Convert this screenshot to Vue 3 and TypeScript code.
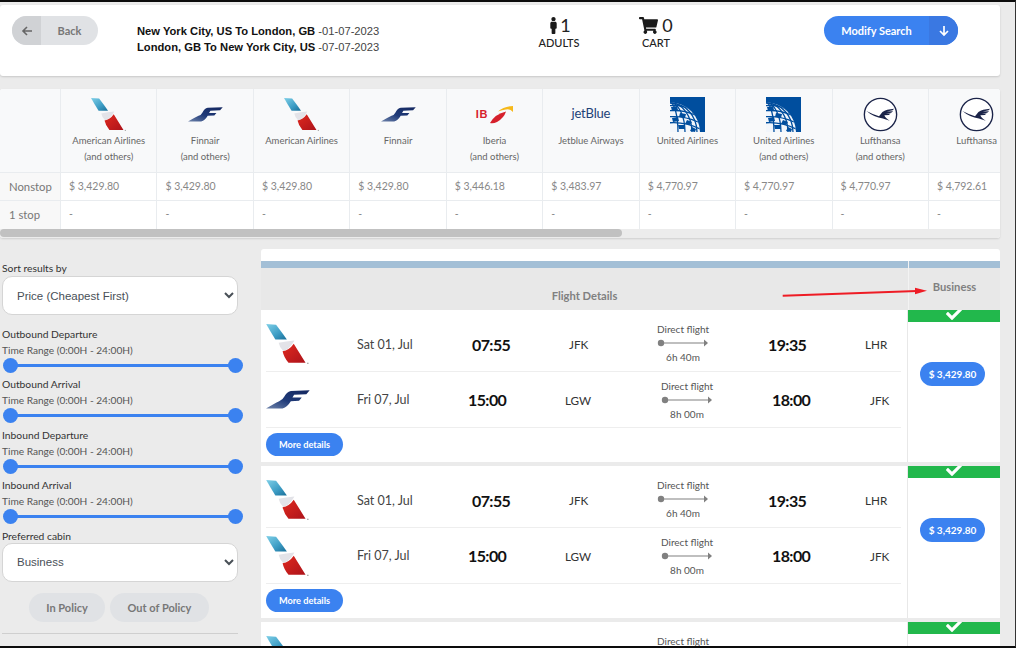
<script setup lang="ts">
interface Airline { logo: string; name: string; others: boolean; price: string }
const airlines: Airline[] = [
  { logo: 'aa', name: 'American Airlines', others: true, price: '$ 3,429.80' },
  { logo: 'fin', name: 'Finnair', others: true, price: '$ 3,429.80' },
  { logo: 'aa', name: 'American Airlines', others: false, price: '$ 3,429.80' },
  { logo: 'fin', name: 'Finnair', others: false, price: '$ 3,429.80' },
  { logo: 'ib', name: 'Iberia', others: true, price: '$ 3,446.18' },
  { logo: 'jb', name: 'Jetblue Airways', others: false, price: '$ 3,483.97' },
  { logo: 'ua', name: 'United Airlines', others: false, price: '$ 4,770.97' },
  { logo: 'ua', name: 'United Airlines', others: true, price: '$ 4,770.97' },
  { logo: 'lh', name: 'Lufthansa', others: true, price: '$ 4,770.97' },
  { logo: 'lh', name: 'Lufthansa', others: false, price: '$ 4,792.61' },
]
const filters = ['Outbound Departure', 'Outbound Arrival', 'Inbound Departure', 'Inbound Arrival']
const results = [{ back: 'fin' }, { back: 'aa' }, { back: 'aa' }]
</script>

<template>
  <div class="page">
    <svg class="defs" width="0" height="0" aria-hidden="true">
      <defs>
        <linearGradient id="finGrad" x1="0" y1="1" x2="1" y2="0">
          <stop offset="0" stop-color="#6f84ab" />
          <stop offset="0.45" stop-color="#1f3a78" />
          <stop offset="1" stop-color="#14275f" />
        </linearGradient>
        <linearGradient id="aaBlue" x1="0" y1="0" x2="1" y2="1">
          <stop offset="0" stop-color="#7fd0e8" />
          <stop offset="0.6" stop-color="#3c9cc4" />
          <stop offset="1" stop-color="#1a6f99" />
        </linearGradient>
        <linearGradient id="aaRed" x1="0" y1="0" x2="1" y2="1">
          <stop offset="0" stop-color="#e0291f" />
          <stop offset="1" stop-color="#ad131a" />
        </linearGradient>
        <symbol id="aa" viewBox="0 0 133 122">
          <path d="M0 0 L30 2 Q50 28 63 47 L28 47 Q12 22 0 0Z" fill="url(#aaBlue)" />
          <path d="M38 57 Q60 52 86 50 L80 60 Q68 78 52 82 Q40 70 38 57Z" fill="#e3e3e8" />
          <path d="M50 83 Q70 80 84 60 L120 118 L68 118 Q54 102 50 83Z" fill="url(#aaRed)" />
          <circle cx="127" cy="120" r="2.5" fill="#aaa" />
        </symbol>
        <symbol id="fin" viewBox="0 0 133 56">
          <path d="M0 55 Q25 40 40 33 Q50 30 55 20 Q62 5 75 2 L132 0 L122 12 L85 14 L80 22 L108 22 L100 32 L75 33 Q65 50 50 55Z" fill="url(#finGrad)" />
        </symbol>
        <symbol id="ib" viewBox="0 0 24 19">
          <path d="M1 18 Q6 9 17 6.5 Q15 13 8 17 Q4 19 1 18Z" fill="#d6202b" />
          <path d="M9 6.5 Q15 1 24 1 L24 7 Q21 3.5 17 4.5 Q13 5 9 6.5Z" fill="#f6b91a" />
        </symbol>
        <symbol id="ua" viewBox="0 0 35 35">
          <clipPath id="uaClip"><circle cx="0" cy="35.5" r="30" /></clipPath>
          <rect width="35" height="35" fill="#004e9e" />
          <g clip-path="url(#uaClip)">
            <rect width="35" height="35" fill="#f2f6fb" />
            <g fill="none" stroke="#004e9e" stroke-width="1.3">
              <ellipse cx="0" cy="35.5" rx="8" ry="30" />
              <ellipse cx="0" cy="35.5" rx="15" ry="30" />
              <ellipse cx="0" cy="35.5" rx="22" ry="30" />
              <ellipse cx="0" cy="35.5" rx="27" ry="30" />
              <path d="M-3 9 Q10 7 20 12" />
              <path d="M-3 14 Q12 12 25 18" />
              <path d="M-3 20 Q13 18 28 25" />
              <path d="M-3 26 Q14 24 30 32" />
            </g>
            <g fill="#004e9e">
              <path d="M1 10l6-1 1 4-6 1z" />
              <path d="M10 16l6 1-1 4-6-1z" />
              <path d="M2 21l6-1 1 4-6 1z" />
              <path d="M17 23l5 2-2 3-5-1z" />
              <path d="M8 28l6 0 1 4-6 0z" />
              <path d="M22 30l4 2-1 3-5-1z" />
            </g>
          </g>
        </symbol>
        <symbol id="lh" viewBox="0 0 36 36">
          <circle cx="18" cy="18" r="16.6" fill="#fff" stroke="#1b2449" stroke-width="1.4" />
          <path d="M3.5 14.5 Q10 18 16.5 19.8 L20 15.5 Q24 12.5 32 12 L30.5 13.5 L24.5 14.8 L31 14.7 L29 16.3 L23.5 17 L28.5 17 L26.5 18.5 L22 18.8 Q22.5 21 27.5 24.5 L20.5 22 Q11 21 3.5 14.5Z" fill="#1b2449" />
        </symbol>
      </defs>
    </svg>

    <header class="topbar">
      <button class="back"><span class="back-icon"><svg width="12" height="12" viewBox="0 0 12 12"><path d="M11 6H2M6 2 2 6l4 4" fill="none" stroke="#666" stroke-width="1.6" /></svg></span><span class="back-text">Back</span></button>
      <div class="route">
        <div><b>New York City, US To London, GB</b> -01-07-2023</div>
        <div><b>London, GB To New York City, US</b> -07-07-2023</div>
      </div>
      <div class="stat adults">
        <div class="stat-top">
          <svg width="7" height="17" viewBox="0 0 192 512"><path fill="#1a1a1a" d="M96 0c35.346 0 64 28.654 64 64s-28.654 64-64 64-64-28.654-64-64S60.654 0 96 0m48 144h-11.36c-22.711 10.443-49.59 10.894-73.28 0H48c-26.51 0-48 21.49-48 48v136c0 13.255 10.745 24 24 24h16v136c0 13.255 10.745 24 24 24h64c13.255 0 24-10.745 24-24V352h16c13.255 0 24-10.745 24-24V192c0-26.51-21.49-48-48-48z" /></svg>
          <span>1</span>
        </div>
        <div class="stat-label">ADULTS</div>
      </div>
      <div class="stat cart">
        <div class="stat-top">
          <svg width="19" height="17" viewBox="0 0 576 512"><path fill="#1a1a1a" d="M528.12 301.319l47.273-208C578.806 78.301 567.391 64 551.99 64H159.208l-9.166-44.81C147.758 8.021 137.93 0 126.529 0H24C10.745 0 0 10.745 0 24v16c0 13.255 10.745 24 24 24h69.883l70.248 343.435C147.325 417.1 136 435.222 136 456c0 30.928 25.072 56 56 56s56-25.072 56-56c0-15.674-6.447-29.835-16.824-40h209.647C430.447 426.165 424 440.326 424 456c0 30.928 25.072 56 56 56s56-25.072 56-56c0-22.172-12.888-41.332-31.579-50.405l5.517-24.276c3.413-15.018-8.002-29.319-23.403-29.319H218.117l-6.545-32h293.145c11.206 0 20.92-7.754 23.403-18.681z" /></svg>
          <span>0</span>
        </div>
        <div class="stat-label">CART</div>
      </div>
      <button class="modify"><span class="modify-text">Modify Search</span><span class="modify-icon"><svg width="12" height="12" viewBox="0 0 12 12"><path d="M6 1v9M2 6l4 4 4-4" fill="none" stroke="#fff" stroke-width="1.7" /></svg></span></button>
    </header>

    <section class="matrix">
      <div class="matrix-grid">
        <div class="cell head corner"></div>
        <div v-for="(a, i) in airlines" :key="'h' + i" class="cell head">
          <div class="logo-slot">
            <span v-if="a.logo === 'jb'" class="jetblue">jetBlue</span>
            <span v-else-if="a.logo === 'ib'" class="iberia"><span class="ib-text">IB</span><svg width="24" height="19"><use href="#ib" /></svg></span>
            <svg v-else-if="a.logo === 'aa'" width="36" height="33" class="aa-top"><use href="#aa" /></svg>
            <svg v-else-if="a.logo === 'fin'" width="35" height="15" class="fin-top"><use href="#fin" /></svg>
            <svg v-else width="35" height="35"><use :href="'#' + a.logo" /></svg>
          </div>
          <div class="air-name">{{ a.name }}</div>
          <div v-if="a.others" class="air-name">(and others)</div>
        </div>
        <div class="cell label row-a">Nonstop</div>
        <div v-for="(a, i) in airlines" :key="'p' + i" class="cell price row-a">{{ a.price }}</div>
        <div class="cell label row-b">1 stop</div>
        <div v-for="(a, i) in airlines" :key="'d' + i" class="cell price row-b dash">-</div>
      </div>
      <div class="scroll-track"><div class="scroll-thumb"></div></div>
    </section>

    <div class="lower">
      <aside class="sidebar">
        <div class="side-label">Sort results by</div>
        <select class="side-select first">
          <option>Price (Cheapest First)</option>
        </select>
        <div class="filters">
          <div v-for="f in filters" :key="f" class="filter">
            <div class="side-label">{{ f }}</div>
            <div class="side-sub">Time Range (0:00H - 24:00H)</div>
            <div class="slider"><span class="thumb"></span><span class="thumb"></span></div>
          </div>
        </div>
        <div class="side-label">Preferred cabin</div>
        <select class="side-select cabin">
          <option>Business</option>
        </select>
        <div class="policy">
          <button class="policy-btn in">In Policy</button>
          <button class="policy-btn outp">Out of Policy</button>
        </div>
        <hr class="side-rule" />
      </aside>

      <main class="results">
        <div class="blue-bar"></div>
        <div class="res-head">
          <div class="res-head-left">Flight Details</div>
          <div class="res-head-right">Business</div>
          <svg class="annot" width="150" height="12" viewBox="0 0 150 12"><path d="M1.7 8.7 136 4" stroke="#ee1c25" stroke-width="2" fill="none" /><path d="M134 .7 146 3.7 134 7.3z" fill="#ee1c25" /></svg>
        </div>
        <article v-for="(r, i) in results" :key="i" class="card">
          <div class="legs">
            <div class="leg out">
              <svg width="44" height="40"><use href="#aa" /></svg>
              <span class="date">Sat 01, Jul</span>
              <span class="time">07:55</span>
              <span class="code">JFK</span>
              <div class="direct">
                <div>Direct flight</div>
                <svg width="52" height="14" viewBox="0 0 52 14"><circle cx="4" cy="7" r="3.2" fill="#808080" /><path d="M4 7H48" stroke="#808080" stroke-width="1.2" /><path d="M47 3.5 51 7l-4 3.5z" fill="#808080" /></svg>
                <div class="dur">6h 40m</div>
              </div>
              <span class="time">19:35</span>
              <span class="code">LHR</span>
            </div>
            <div class="leg ret">
              <svg v-if="r.back === 'fin'" width="44" height="19"><use href="#fin" /></svg>
              <svg v-else width="44" height="40"><use href="#aa" /></svg>
              <span class="date">Fri 07, Jul</span>
              <span class="time">15:00</span>
              <span class="code">LGW</span>
              <div class="direct">
                <div>Direct flight</div>
                <svg width="52" height="14" viewBox="0 0 52 14"><circle cx="4" cy="7" r="3.2" fill="#808080" /><path d="M4 7H48" stroke="#808080" stroke-width="1.2" /><path d="M47 3.5 51 7l-4 3.5z" fill="#808080" /></svg>
                <div class="dur">8h 00m</div>
              </div>
              <span class="time">18:00</span>
              <span class="code">JFK</span>
            </div>
            <button class="more">More details</button>
          </div>
          <div class="fare">
            <div class="fare-ok"><svg width="16" height="16" viewBox="0 0 512 512"><path fill="#fff" d="M173.898 439.404l-166.4-166.4c-9.997-9.997-9.997-26.206 0-36.204l36.203-36.204c9.997-9.998 26.207-9.998 36.204 0L192 312.69 432.095 72.596c9.997-9.997 26.207-9.997 36.204 0l36.203 36.204c9.997 9.997 9.997 26.206 0 36.204l-294.4 294.401c-9.998 9.997-26.207 9.997-36.204-.001z" /></svg></div>
            <button class="fare-price">$ 3,429.80</button>
          </div>
        </article>
      </main>
    </div>
  </div>
</template>

<style>
html, body { margin: 0; padding: 0; background: #ebebeb; }
</style>

<style scoped>
.page {
  position: relative;
  box-sizing: border-box;
  width: 1016px;
  height: 648px;
  overflow: hidden;
  background: #ebebeb;
  border-top: 2px solid #0c0c0c;
  border-bottom: 2px solid #0c0c0c;
  border-right: 1px solid #333;
  font-family: Lato, "Open Sans", sans-serif;
  color: #333;
}
.defs { position: absolute; }
button { font-family: inherit; border: 0; padding: 0; cursor: pointer; }

.topbar {
  box-sizing: border-box;
  display: flex;
  align-items: flex-start;
  width: 1000px;
  height: 71px;
  margin-top: 3px;
  padding: 11px 0 0 12px;
  background: #fff;
  border-radius: 3px;
  box-shadow: 0 1px 2px rgba(0,0,0,.15);
}
.back {
  display: flex;
  width: 86px;
  height: 29px;
  border-radius: 15px;
  overflow: hidden;
  background: #e0e2e5;
  color: #777;
  font-size: 11px;
  font-weight: 700;
}
.back-icon { display: flex; align-items: center; justify-content: center; width: 29px; height: 100%; background: #d0d2d5; }
.back-text { flex: 1; line-height: 29px; text-align: center; }
.route {
  width: 401px;
  margin-left: 39px;
  padding-top: 7px;
  font: 11.2px/16px "Liberation Sans", sans-serif;
  color: #444;
  white-space: nowrap;
}
.route b { color: #111; }
.stat { display: flex; flex-direction: column; align-items: center; color: #222; }
.adults { width: 42px; }
.cart { width: 32px; margin-left: 60px; }
.stat-top { display: flex; align-items: center; gap: 4px; height: 19px; font-size: 18px; line-height: 19px; }
.adults .stat-top { margin-left: 3px; gap: 3px; }
.stat-label { font-size: 11px; line-height: 14px; margin-top: 1px; font-weight: 500; }
.modify {
  display: flex;
  width: 134px;
  height: 29px;
  margin-left: 152px;
  border-radius: 15px;
  overflow: hidden;
  background: #3b82f0;
  color: #fff;
  font-size: 11px;
  font-weight: 700;
}
.modify-text { width: 105px; line-height: 29px; text-align: center; }
.modify-icon { flex: 1; display: flex; align-items: center; justify-content: center; background: #3a78e2; }

.matrix {
  width: 1000px;
  height: 149px;
  margin-top: 13px;
  overflow: hidden;
  background: #fff;
  border-radius: 3px;
  box-shadow: 0 1px 2px rgba(0,0,0,.12);
}
.matrix-grid {
  display: grid;
  grid-template-columns: 61px repeat(10, 96.45px);
  grid-template-rows: 84px 28px 28px;
  width: 1026px;
  height: 140px;
}
.cell { box-sizing: border-box; border-right: 1px solid #e9ecef; border-bottom: 1px solid #e9ecef; }
.head { background: #f8f9fa; text-align: center; padding-top: 8px; }
.logo-slot { display: flex; align-items: flex-start; justify-content: center; height: 36px; }
.aa-top { margin-top: 1px; }
.fin-top { margin-top: 10px; }
.air-name { font-size: 9.5px; line-height: 16px; color: #666; white-space: nowrap; }
.jetblue { margin-top: 8px; font-size: 13px; line-height: 16px; color: #1d4278; letter-spacing: -.2px; }
.iberia { display: flex; align-items: center; gap: 1px; margin-top: 8px; height: 19px; }
.ib-text { font: 700 11px/19px "Liberation Sans", sans-serif; color: #d6202b; letter-spacing: .6px; }
.label { padding-left: 9px; background: #f8f8f8; font-size: 11.3px; line-height: 27px; color: #777; }
.price { padding-left: 8px; font-size: 10.5px; line-height: 27px; color: #888; white-space: nowrap; }
.row-b { border-bottom: 0; }
.dash { color: #888; }
.scroll-track { height: 9px; background: #ececec; }
.scroll-thumb { width: 622px; height: 8px; border-radius: 4px; background: #c1c1c1; }

.lower { display: flex; align-items: flex-start; margin-top: 11px; width: 1000px; }
.sidebar { box-sizing: border-box; width: 261px; padding: 11px 0 0 2px; flex: none; }
.side-label { font-size: 10.3px; line-height: 16px; color: #333; white-space: nowrap; }
.side-sub { font-size: 10.15px; line-height: 16px; color: #555; white-space: nowrap; }
.side-select {
  display: block;
  box-sizing: border-box;
  width: 236px;
  height: 39px;
  margin-top: -1px;
  padding: 0 0 0 10px;
  background-color: #fff;
  border: 1px solid #d5d5d5;
  border-radius: 10px;
  font: 11.5px "Liberation Sans", sans-serif;
  color: #495057;
}
.side-select.first { margin-top: 0; }
.filters { margin-top: 11px; }
.filter { height: 50.4px; }
.slider {
  display: flex;
  align-items: center;
  justify-content: space-between;
  position: relative;
  width: 240px;
  height: 15px;
  margin-left: 1px;
}
.slider::before {
  content: "";
  position: absolute;
  left: 7px;
  right: 7px;
  top: 6px;
  height: 3px;
  background: #3b82f0;
}
.thumb { position: relative; width: 15px; height: 15px; border-radius: 50%; background: #3b82f0; }
.policy { display: flex; gap: 5px; margin: 11px 0 0 27px; }
.policy-btn {
  height: 29px;
  border-radius: 15px;
  background: #e0e2e5;
  color: #777;
  font-size: 11px;
  font-weight: 700;
}
.in { width: 76px; }
.outp { width: 99px; }
.side-rule { width: 236px; margin: 11px 0 0; border: 0; border-top: 1px solid #cfcfcf; }

.results { position: relative; width: 739px; padding-top: 12px; background: #ebebeb; }
.results::before { content: ""; position: absolute; left: 0; right: 0; top: 0; height: 12px; background: #fff; border-radius: 3px 3px 0 0; }
.blue-bar { position: relative; height: 7px; background: #a3bfd6; }
.res-head { position: relative; display: flex; height: 42px; background: #e8e8e8; font-size: 11.2px; font-weight: 700; color: #808080; }
.res-head-left { box-sizing: border-box; width: 647px; padding-top: 21px; text-align: center; }
.res-head-right { flex: 1; margin-top: -7px; padding-top: 19px; text-align: center; border-left: 1px solid #f3f3f3; }
.annot { position: absolute; left: 520px; top: 19px; }

.card { display: flex; height: 152px; margin-bottom: 4px; background: #fff; }
.legs { box-sizing: border-box; width: 646px; padding-left: 5px; }
.leg { display: grid; align-items: center; width: 635px; border-bottom: 1px solid #eee; box-sizing: content-box; }
.out { height: 54px; padding-top: 7px; grid-template-columns: 91px 115px 97px 88px 111px 97px 38px; }
.out .direct { margin-top: -2px; }
.ret { height: 55px; grid-template-columns: 91px 111px 97px 96px 111px 98px 31px; }
.date { font-size: 12.5px; color: #444; white-space: nowrap; }
.time { font-size: 16px; font-weight: 700; color: #111; letter-spacing: -.6px; white-space: nowrap; }
.code { font-size: 11.7px; color: #333; white-space: nowrap; }
.direct { width: 52px; font-size: 10px; line-height: 14px; color: #555; text-align: center; white-space: nowrap; }
.direct svg { display: block; }
.more {
  display: block;
  width: 77px;
  height: 23px;
  margin-top: 5px;
  border-radius: 12px;
  background: #3b82f0;
  color: #fff;
  font-size: 9.2px;
  font-weight: 700;
}
.fare { flex: 1; display: flex; flex-direction: column; align-items: center; border-left: 1px solid #e8e8e8; }
.fare-ok { display: flex; justify-content: center; align-items: flex-end; width: 100%; height: 12px; overflow: hidden; background: #22b84c; }
.fare-price {
  width: 65px;
  height: 24px;
  margin: 40px 3px 0 0;
  border-radius: 12px;
  background: #3b82f0;
  color: #fff;
  font-size: 10px;
  font-weight: 700;
}
</style>
